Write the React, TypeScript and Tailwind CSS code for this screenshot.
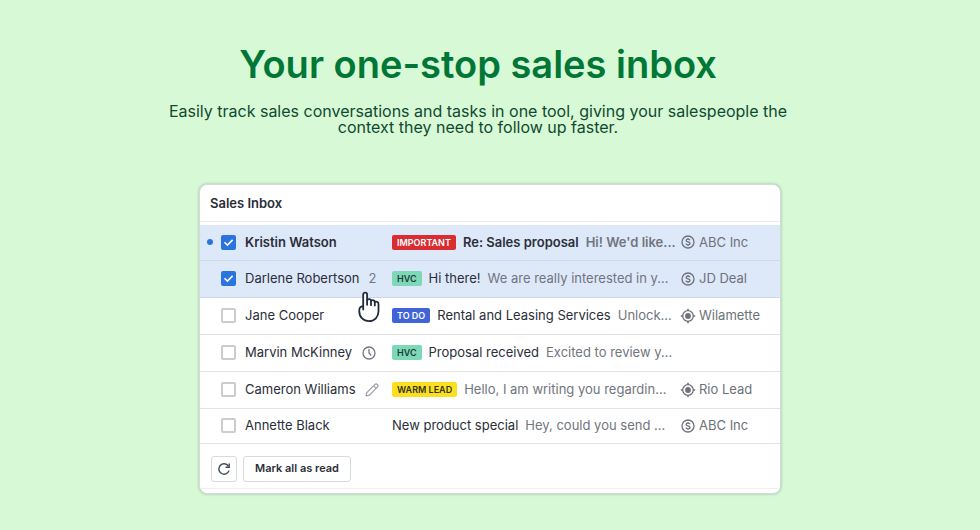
// Landing section that introduces the shared sales inbox.

import { useState } from "react";
import type { ReactNode } from "react";

type Message = {
  id: number;
  name: string;
  note?: ReactNode;
  unread?: boolean;
  tag?: string;
  subject?: string;
  preview: string;
  deal?: string;
  dealType?: "deal" | "lead";
};

const TAG_STYLES: Record<string, string> = {
  IMPORTANT: "bg-[#d92d32] text-white",
  HVC: "bg-[#7dd8b5] text-[#1d3b3a]",
  "TO DO": "bg-[#4063d8] text-white",
  "WARM LEAD": "bg-[#fbe020] text-[#33301c]",
};

function ClockIcon() {
  return (
    <svg className="size-4 text-[#717784]" viewBox="0 0 16 16" fill="none" stroke="currentColor" strokeWidth="1.3" aria-hidden="true">
      <circle cx="8" cy="8" r="6" />
      <path d="M8 4.4V8l1.8 2.2" strokeLinecap="round" />
    </svg>
  );
}

function PencilIcon() {
  return (
    <svg className="size-[14px] text-[#999da5]" viewBox="1 1 14 14" fill="none" stroke="currentColor" strokeWidth="1.2" strokeLinejoin="round" aria-hidden="true">
      <path d="M2 14l.8-3.4 8-8a1.8 1.8 0 0 1 2.6 2.6l-8 8z" />
      <path d="M9.6 3.8l2.6 2.6" />
    </svg>
  );
}

function DealIcon() {
  return (
    <svg className="size-4 shrink-0" viewBox="0 0 16 16" fill="none" stroke="currentColor" strokeWidth="1.3" aria-hidden="true">
      <circle cx="8" cy="8" r="6" />
      <path d="M10 6.2C9.8 5.5 9 5.1 8 5.1c-1.1 0-1.9.5-1.9 1.4 0 2 3.9.9 3.9 3 0 .9-.9 1.4-2 1.4s-1.9-.5-2.1-1.3M8 3.9v1.2M8 10.9v1.2" />
    </svg>
  );
}

function LeadIcon() {
  return (
    <svg className="size-4 shrink-0" viewBox="0 0 16 16" fill="none" stroke="currentColor" strokeWidth="1.3" aria-hidden="true">
      <circle cx="8" cy="8" r="5.3" />
      <circle cx="8" cy="8" r="2.9" fill="currentColor" stroke="none" />
      <path d="M8 .8v2M8 13.2v2M.8 8h2M13.2 8h2" strokeWidth="1.6" />
    </svg>
  );
}

function RefreshIcon() {
  return (
    <svg className="size-4 text-[#3b4453]" viewBox="0 0 16 16" fill="none" stroke="currentColor" strokeWidth="1.4" aria-hidden="true">
      <path d="M13 9.6A5.2 5.2 0 1 1 12.3 5" />
      <path d="M13.2 2.6v3.6H9.6" />
    </svg>
  );
}

function HandCursor() {
  return (
    <svg className="pointer-events-none absolute top-[106px] left-[156px] h-8 w-6" viewBox="0 0 24 32" fill="#fff" stroke="#1f2b3d" strokeWidth="1.8" strokeLinecap="round" strokeLinejoin="round" aria-hidden="true">
      <path d="M7.2 18.5V3.5a1.95 1.95 0 0 1 3.9 0v5.3c1.8-1.2 3.6-.7 3.9.8 1.8-.9 3.5-.3 3.8 1.2 2.2-.7 3.7.3 3.7 2.3v7.2c0 5.6-3.9 9.8-9.5 9.8S3.3 26 3.3 20.500v-1.700c0-2 1.500-3.400 3.900-4z" />
      <path d="M11.100 8.800v5M15 10v4.200M18.800 11.200v3.400" />
    </svg>
  );
}

const MESSAGES: Message[] = [
  { id: 1, name: "Kristin Watson", unread: true, tag: "IMPORTANT", subject: "Re: Sales proposal", preview: "Hi! We'd like...", deal: "ABC Inc", dealType: "deal" },
  { id: 2, name: "Darlene Robertson", note: "2", tag: "HVC", subject: "Hi there!", preview: "We are really interested in y...", deal: "JD Deal", dealType: "deal" },
  { id: 3, name: "Jane Cooper", tag: "TO DO", subject: "Rental and Leasing Services", preview: "Unlock...", deal: "Wilamette", dealType: "lead" },
  { id: 4, name: "Marvin McKinney", note: <ClockIcon />, tag: "HVC", subject: "Proposal received", preview: "Excited to review y..." },
  { id: 5, name: "Cameron Williams", note: <PencilIcon />, tag: "WARM LEAD", preview: "Hello, I am writing you regardin...", deal: "Rio Lead", dealType: "lead" },
  { id: 6, name: "Annette Black", subject: "New product special", preview: "Hey, could you send ...", deal: "ABC Inc", dealType: "deal" },
];

export default function App() {
  const [selected, setSelected] = useState<number[]>([1, 2]);
  const [allRead, setAllRead] = useState(false);

  const toggle = (id: number) => {
    setSelected((prev) => (prev.includes(id) ? prev.filter((x) => x !== id) : [...prev, id]));
  };

  return (
    <main className="min-h-screen bg-[#d8f9d6] px-4 pt-10 pb-9 font-['Inter','Liberation_Sans',sans-serif]">
      <header className="text-center sm:pr-6">
        <h1 className="text-[38px] leading-12 font-semibold text-[#017737]">Your one-stop sales inbox</h1>
        <p className="mx-auto mt-[15px] max-w-[640px] text-base leading-4 text-[#10492f]">
          Easily track sales conversations and tasks in one tool, giving your salespeople the context they need to follow up faster.
        </p>
      </header>

      <section className="relative mx-auto mt-[49px] w-full max-w-[582px] rounded-lg border border-[#d3dcdb] bg-white text-[13px] text-[#2a2e38] shadow-[0_0_3px_rgba(60,100,80,0.4)]">
        <h2 className="border-b border-[#e9e9e9] px-[10px] py-2 leading-5 font-semibold">Sales Inbox</h2>
        <table className="mt-[3px] w-full table-fixed border-collapse">
          <colgroup>
            <col className="w-[45px]" />
            <col className="w-[147px]" />
            <col />
            <col className="w-[100px]" />
          </colgroup>
          <tbody>
            {MESSAGES.map((m) => {
              const checked = selected.includes(m.id);
              const unread = m.unread && !allRead;
              return (
                <tr
                  key={m.id}
                  className={`h-[37px] border-b first:h-[35px] last:h-[35px] ${checked ? "border-[#cdd8e8] bg-[#dde8f9]" : "border-[#e2e3e5]"} ${unread ? "font-semibold" : ""}`}
                >
                  <td>
                    <div className="flex items-center gap-2 pl-[7px]">
                      <span className={`size-[6px] rounded-full ${unread ? "bg-[#2b74df]" : ""}`} />
                      <span className="relative flex">
                        <input
                          id={`message-${m.id}`}
                          type="checkbox"
                          checked={checked}
                          onChange={() => toggle(m.id)}
                          className="size-[15px] cursor-pointer appearance-none rounded-[2px] border-2 border-[#cbcccd] bg-white checked:border-[#2b74df] checked:bg-[#2b74df]"
                        />
                        {checked && (
                          <svg className="pointer-events-none absolute inset-0 size-[15px]" viewBox="0 0 15 15" fill="none" stroke="#fff" strokeWidth="1.5" aria-hidden="true">
                            <path d="M3.5 7.3l2.9 2.8 5.2-5.2" />
                          </svg>
                        )}
                      </span>
                    </div>
                  </td>
                  <td>
                    <div className="flex items-center gap-[9px] whitespace-nowrap">
                      <label htmlFor={`message-${m.id}`} className="cursor-pointer">{m.name}</label>
                      {m.note && <span className="text-[#717784]">{m.note}</span>}
                    </div>
                  </td>
                  <td>
                    <div className="flex items-center gap-[7px] whitespace-nowrap">
                      {m.tag && (
                        <span className={`rounded-[2px] px-[5px] text-[9px] leading-[15px] font-semibold ${TAG_STYLES[m.tag]}`}>{m.tag}</span>
                      )}
                      {m.subject && <span>{m.subject}</span>}
                      <span className="text-[#71757e]">{m.preview}</span>
                    </div>
                  </td>
                  <td>
                    {m.deal && (
                      <div className="flex items-center gap-[3px] font-normal whitespace-nowrap text-[#6d7179]">
                        {m.dealType === "lead" ? <LeadIcon /> : <DealIcon />}
                        {m.deal}
                      </div>
                    )}
                  </td>
                </tr>
              );
            })}
          </tbody>
        </table>
        <footer className="flex gap-[6px] border-b border-[#f0f0f0] px-[11px] pt-3 pb-[6px]">
          <button
            type="button"
            aria-label="Refresh"
            className="flex size-[26px] cursor-pointer items-center justify-center rounded-[3px] border border-[#d9dadc] hover:bg-gray-50"
          >
            <RefreshIcon />
          </button>
          <button
            type="button"
            onClick={() => setAllRead(true)}
            className="h-[26px] cursor-pointer rounded-[3px] border border-[#d9dadc] px-[11px] text-[11px] font-semibold hover:bg-gray-50"
          >
            Mark all as read
          </button>
        </footer>
        <div className="h-1" />
        <HandCursor />
      </section>
    </main>
  );
}
